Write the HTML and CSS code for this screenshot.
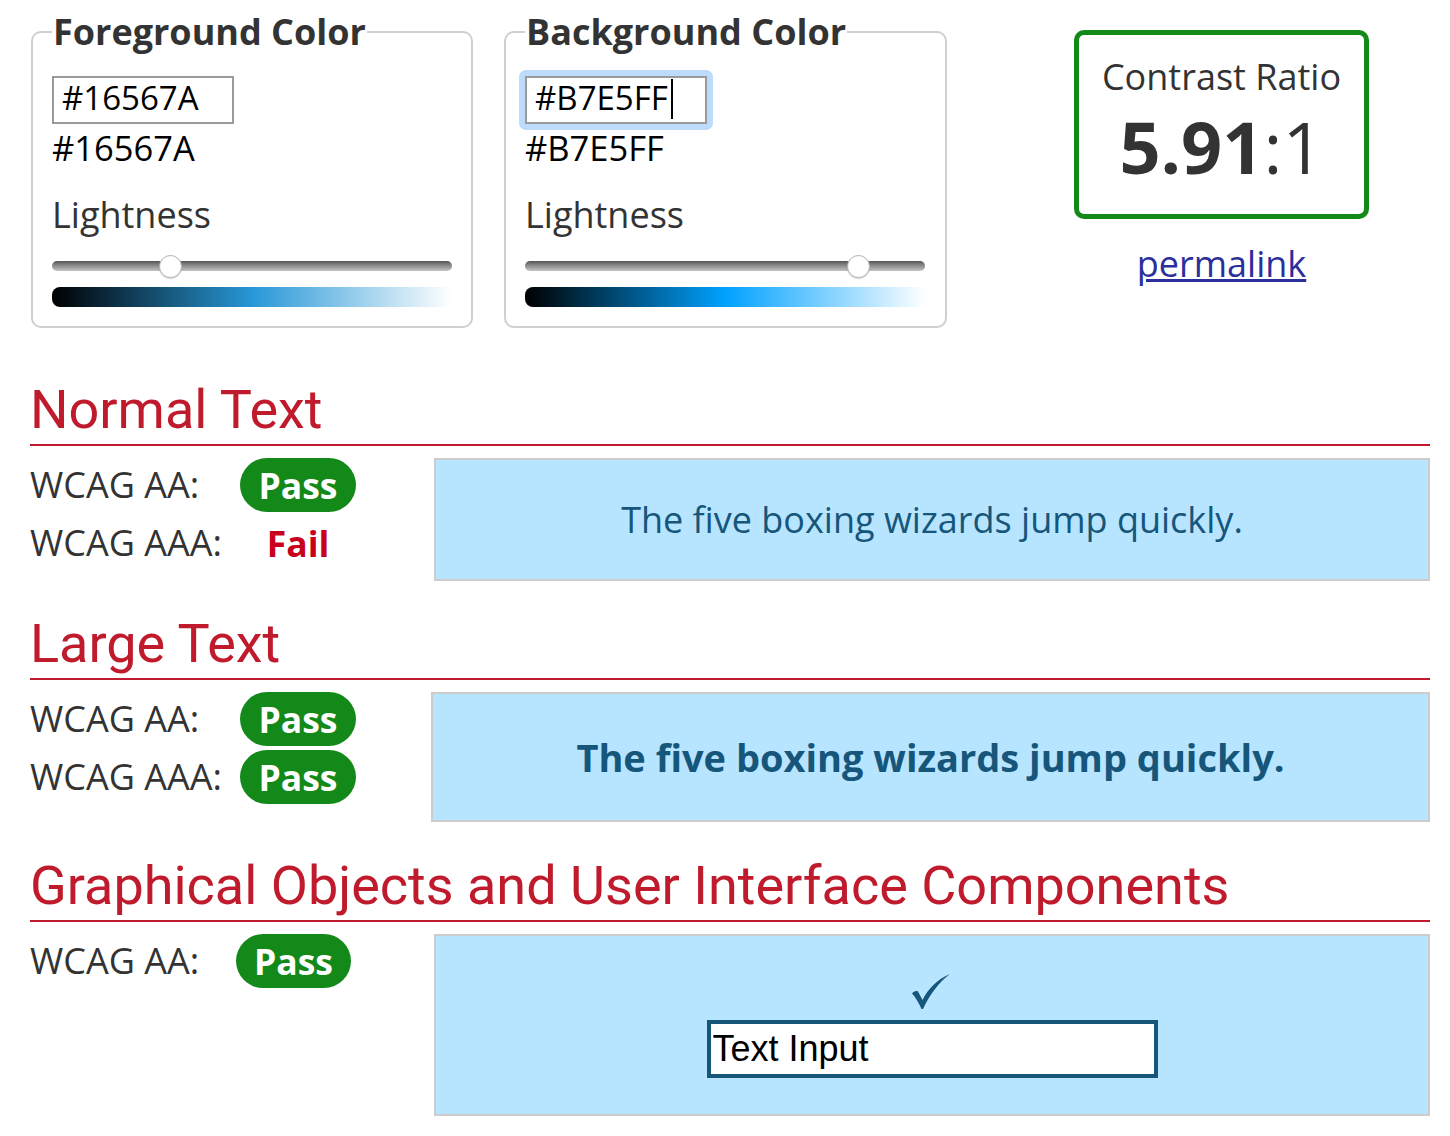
FILE: index.html
```html
<!DOCTYPE html>
<html lang="en">
<head>
<meta charset="utf-8">
<title>Contrast Checker</title>
<link rel="stylesheet" href="styles.css">
</head>
<body>
<div class="page">
  <div class="top">
    <fieldset class="color-box">
      <legend>Foreground Color</legend>
      <input class="hex-input" type="text" value="#16567A">
      <div class="hex-value">#16567A</div>
      <div class="light-label">Lightness</div>
      <input class="slider" type="range" min="0" max="100" step="0.1" value="28.5">
      <div class="gradient gradient-fg"></div>
    </fieldset>
    <fieldset class="color-box color-box-bg">
      <legend>Background Color</legend>
      <div class="focus-ring"><input class="hex-input" type="text" value="#B7E5FF"><span class="caret"></span></div>
      <div class="hex-value">#B7E5FF</div>
      <div class="light-label">Lightness</div>
      <input class="slider" type="range" min="0" max="100" step="0.1" value="85.3">
      <div class="gradient gradient-bg"></div>
    </fieldset>
    <div class="ratio-col">
      <div class="ratio-box">
        <div class="ratio-title">Contrast Ratio</div>
        <div class="ratio-value"><b>5.91</b>:1</div>
      </div>
      <a class="permalink" href="#">permalink</a>
    </div>
  </div>

  <section class="result result-first">
    <h2>Normal Text</h2>
    <div class="result-body">
      <div class="checks checks-normal">
        <span class="check-label">WCAG AA:</span><span class="pill">Pass</span>
        <span class="check-label">WCAG AAA:</span><span class="fail">Fail</span>
      </div>
      <div class="sample sample-normal">The five boxing wizards jump quickly.</div>
    </div>
  </section>

  <section class="result">
    <h2>Large Text</h2>
    <div class="result-body">
      <div class="checks checks-large">
        <span class="check-label">WCAG AA:</span><span class="pill">Pass</span>
        <span class="check-label">WCAG AAA:</span><span class="pill">Pass</span>
      </div>
      <div class="sample sample-large">The five boxing wizards jump quickly.</div>
    </div>
  </section>

  <section class="result result-last">
    <h2>Graphical Objects and User Interface Components</h2>
    <div class="result-body">
      <div class="checks checks-graphic">
        <span class="check-label">WCAG AA:</span><span class="pill">Pass</span>
      </div>
      <div class="sample sample-graphic">
        <svg class="checkmark" viewBox="0 0 38 35" width="38" height="35" aria-hidden="true">
          <path d="M0 19.5 C1.5 17.5 4 16.5 6 17.5 L10.5 26 C16 15 25 5.5 38 0 C27 8 18 20 11 35 L9.5 35 C6.5 28.5 3.5 23 0 19.5 Z"/>
        </svg>
        <input class="demo-input" type="text" value="Text Input">
      </div>
    </div>
  </section>
</div>
</body>
</html>
```

FILE: styles.css
```css
html, body {
  margin: 0;
  padding: 0;
  background: #fff;
}

body {
  font-family: "Open Sans", "DejaVu Sans", sans-serif;
  font-size: 36px;
  line-height: 48px;
  color: #333;
}

.page {
  width: 1400px;
  padding: 8px 20px 40px 30px;
}

/* ---------- top row ---------- */
.top {
  display: flex;
  align-items: flex-start;
  margin-left: 1px;
}

.color-box {
  box-sizing: border-box;
  width: 442px;
  margin: 0;
  padding: 20px 19px 19px;
  border: 2px solid #cfcfcf;
  border-radius: 10px;
  min-width: 0;
}

.color-box-bg {
  width: 443px;
  margin-left: 31px;
}

.color-box legend {
  padding: 0 1px;
  font-weight: 700;
  font-size: 36px;
  line-height: 48px;
  color: #333;
}

.hex-input {
  display: block;
  box-sizing: border-box;
  width: 182px;
  height: 48px;
  margin: 0;
  padding: 0 8px 5px;
  border: 2px solid #9a9a9a;
  font-family: inherit;
  font-size: 33px;
  color: #000;
  background: #fff;
  outline: none;
}

.focus-ring {
  position: relative;
  width: max-content;
  margin: -6px;
  padding: 6px;
  border-radius: 7px;
  background: #bddbfa;
}

.caret {
  position: absolute;
  left: 152px;
  top: 9px;
  width: 2px;
  height: 40px;
  background: #000;
}

.hex-value {
  color: #000;
  font-size: 34.5px;
  line-height: 48px;
}

.light-label {
  margin-top: 19px;
  line-height: 48px;
  color: #333;
}

.slider {
  -webkit-appearance: none;
  appearance: none;
  display: block;
  width: 400px;
  height: 24px;
  margin: 15px 0 0;
  padding: 0;
  background: transparent;
}

.slider::-webkit-slider-runnable-track {
  height: 10px;
  border-radius: 5px;
  background: linear-gradient(to bottom, #555 0%, #8a8a8a 45%, #c4c4c4 100%);
}

.slider::-webkit-slider-thumb {
  -webkit-appearance: none;
  appearance: none;
  box-sizing: border-box;
  width: 23px;
  height: 23px;
  margin-top: -6.5px;
  border-radius: 50%;
  border: 1px solid #b3b3b3;
  background: #fff;
  box-shadow: 0 1px 1px rgba(0, 0, 0, 0.15);
}

.gradient {
  height: 20px;
  margin-top: 9px;
  border-radius: 8px;
}

.gradient-fg {
  background: linear-gradient(to right, hsl(202, 69%, 0%), hsl(202, 69%, 50%), hsl(202, 69%, 100%));
}

.gradient-bg {
  background: linear-gradient(to right, hsl(202, 100%, 0%), hsl(202, 100%, 50%), hsl(202, 100%, 100%));
}

.ratio-col {
  display: flex;
  flex-direction: column;
  align-items: center;
  width: 295px;
  margin-left: 127px;
  margin-top: 22px;
}

.ratio-box {
  box-sizing: border-box;
  width: 295px;
  padding: 18px 0 23px;
  border: 5px solid #13891a;
  border-radius: 10px;
  text-align: center;
  color: #333;
}

.ratio-title {
  line-height: 48px;
}

.ratio-value {
  font-size: 72px;
  line-height: 90px;
}

.ratio-value b {
  font-weight: 700;
}

.permalink {
  margin-top: 21px;
  color: #2b2f9c;
  line-height: 48px;
  text-decoration: underline;
}

/* ---------- result sections ---------- */
.result {
  margin-top: 33px;
}

.result-first {
  margin-top: 52px;
}

.result-last {
  margin-top: 34px;
}

.result h2 {
  margin: 0 0 12px;
  padding-bottom: 4px;
  border-bottom: 2px solid #bf1b2c;
  font-family: Roboto, "Liberation Sans", sans-serif;
  font-weight: 400;
  font-size: 54px;
  line-height: 60px;
  color: #bf1b2c;
}

.result-body {
  display: flex;
  align-items: flex-start;
}

.checks {
  display: grid;
  grid-auto-rows: 54px;
  row-gap: 4px;
  align-items: center;
  flex: none;
}

.checks-normal {
  grid-template-columns: 210px 116px;
  margin-right: 78px;
}

.checks-large {
  grid-template-columns: 210px 116px;
  margin-right: 75px;
}

.checks-graphic {
  grid-template-columns: 206px 115px;
  margin-right: 83px;
}

.check-label {
  line-height: 54px;
  color: #333;
  white-space: nowrap;
}

.pill,
.fail {
  font-weight: 700;
  font-size: 35.5px;
  line-height: 54px;
  text-align: center;
}

.pill {
  height: 54px;
  border-radius: 27px;
  background: #13891a;
  color: #fff;
}

.fail {
  color: #c8001e;
}

.sample {
  flex: 1;
  box-sizing: border-box;
  border: 2px solid #cccccc;
  background: #b7e5ff;
  color: #16567a;
  text-align: center;
}

.sample-normal {
  padding: 37px 0 37px;
  line-height: 45px;
}

.sample-large {
  padding: 38px 0 37px;
  font-weight: 700;
  font-size: 38px;
  line-height: 51px;
}

.sample-graphic {
  display: flex;
  flex-direction: column;
  align-items: center;
  padding: 38px 0 36px;
}

.checkmark {
  display: block;
  fill: #16567a;
  margin-bottom: 11px;
  margin-left: -3px;
}

.demo-input {
  display: block;
  box-sizing: border-box;
  width: 451px;
  height: 58px;
  margin: 0;
  padding: 0 2px;
  border: 4px solid #16567a;
  background: #fff;
  color: #000;
  font-family: "Liberation Sans", Arial, sans-serif;
  font-size: 36px;
  outline: none;
}
```
